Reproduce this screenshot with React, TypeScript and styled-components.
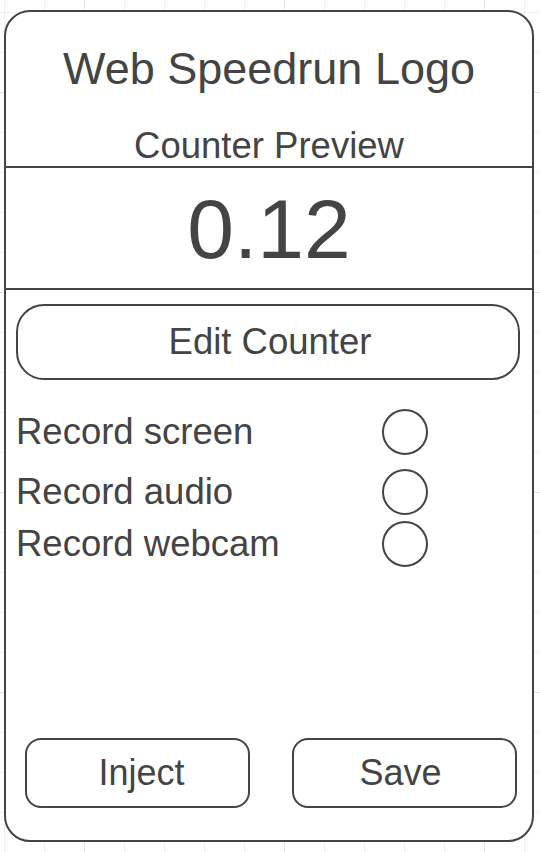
import React from "react";
import styled, { createGlobalStyle } from "styled-components";

const GlobalStyle = createGlobalStyle`
  html, body {
    margin: 0;
    padding: 0;
  }
  body {
    min-height: 852px;
    background-color: #ffffff;
    background-image:
      linear-gradient(to right, #e4e4e4 1px, transparent 1px),
      linear-gradient(to bottom, #e4e4e4 1px, transparent 1px),
      linear-gradient(to right, #f0f0f0 1px, transparent 1px),
      linear-gradient(to bottom, #f0f0f0 1px, transparent 1px);
    background-size: 200px 200px, 200px 200px, 40px 40px, 40px 40px;
    background-position: 84px 92px, 84px 92px, 4px 12px, 4px 12px;
    font-family: "Liberation Sans", Arial, Helvetica, sans-serif;
    color: #444444;
  }
`;

const Page = styled.div`
  display: flex;
  padding: 10px 6px 10px 4px;
  height: 852px;
  box-sizing: border-box;
`;

const Card = styled.div`
  flex: 1;
  display: flex;
  flex-direction: column;
  box-sizing: border-box;
  border: 2px solid #444444;
  border-radius: 26px;
  background: #ffffff;
  overflow: hidden;
`;

const Header = styled.div`
  height: 156px;
  box-sizing: border-box;
  border-bottom: 2px solid #444444;
  display: flex;
  flex-direction: column;
  align-items: center;
`;

const Title = styled.div`
  font-size: 45px;
  line-height: 50px;
  margin-top: 32px;
`;

const Subtitle = styled.div`
  font-size: 36.5px;
  line-height: 40px;
  margin-top: 32px;
`;

const CounterBox = styled.div`
  height: 122px;
  box-sizing: border-box;
  border-bottom: 2px solid #444444;
  display: flex;
  align-items: center;
  justify-content: center;
  font-size: 84px;
  line-height: 1;
  padding-top: 2px;
`;

const Body = styled.div`
  flex: 1;
  display: flex;
  flex-direction: column;
  padding: 14px 13px 32px 10px;
`;

const PillButton = styled.button<{ $radius: number; $shift?: number }>`
  box-sizing: border-box;
  border: 2px solid #444444;
  border-radius: ${(p) => p.$radius}px;
  background: #ffffff;
  color: #444444;
  font-family: "Liberation Sans", Arial, Helvetica, sans-serif;
  font-size: 36px;
  padding: 0;
  padding-left: ${(p) => Math.max(0, (p.$shift ?? 0) * 2)}px;
  padding-right: ${(p) => Math.max(0, -(p.$shift ?? 0) * 2)}px;
  display: flex;
  align-items: center;
  justify-content: center;
  cursor: pointer;
`;

const EditButton = styled(PillButton)`
  width: 504px;
  height: 76px;
  font-size: 36.5px;
`;

const Options = styled.div`
  display: flex;
  flex-direction: column;
  margin-top: 29px;
`;

const OptionRow = styled.label<{ $gap: number }>`
  display: flex;
  align-items: center;
  height: 46px;
  margin-top: ${(p) => p.$gap}px;
  font-size: 36.5px;
`;

const OptionLabel = styled.span`
  width: 366px;
`;

const Radio = styled.span`
  width: 46px;
  height: 46px;
  box-sizing: border-box;
  border: 2px solid #444444;
  border-radius: 50%;
`;

const Footer = styled.div`
  margin-top: auto;
  display: flex;
  justify-content: space-between;
  padding-left: 9px;
  padding-right: 2px;
`;

const FooterButton = styled(PillButton)`
  width: 225px;
  height: 70px;
`;

const options = [
  { label: "Record screen", gap: 0 },
  { label: "Record audio", gap: 14 },
  { label: "Record webcam", gap: 6 },
];

export default function App() {
  return (
    <>
      <GlobalStyle />
      <Page>
        <Card>
          <Header>
            <Title>Web Speedrun Logo</Title>
            <Subtitle>Counter Preview</Subtitle>
          </Header>
          <CounterBox>0.12</CounterBox>
          <Body>
            <EditButton $radius={28} $shift={2}>
              Edit Counter
            </EditButton>
            <Options>
              {options.map((o) => (
                <OptionRow key={o.label} $gap={o.gap}>
                  <OptionLabel>{o.label}</OptionLabel>
                  <Radio />
                </OptionRow>
              ))}
            </Options>
            <Footer>
              <FooterButton $radius={16} $shift={4}>
                Inject
              </FooterButton>
              <FooterButton $radius={16} $shift={-4}>
                Save
              </FooterButton>
            </Footer>
          </Body>
        </Card>
      </Page>
    </>
  );
}
